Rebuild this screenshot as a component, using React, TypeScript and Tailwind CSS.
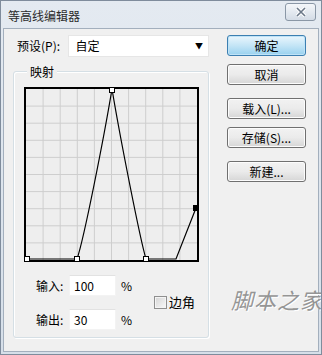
import React from "react";

const GRID = Array.from({ length: 9 }, (_, i) => 2 + (i + 1) * 17.1);

const Button = ({ label, primary }: { label: string; primary?: boolean }) => (
  <div
    className={`w-[79px] h-[21px] rounded-[3px] border flex items-center justify-center text-[12px] ${
      primary
        ? "border-[#3c7fb1] bg-gradient-to-b from-[#eaf6fd] via-[#c4e5f6] to-[#98d1ef] shadow-[0_0_0_1px_#bfe3f7_inset]"
        : "border-[#707070] bg-gradient-to-b from-[#f2f2f2] via-[#ebebeb] to-[#d6d6d6] shadow-[0_0_0_1px_#fcfcfc_inset]"
    }`}
  >
    {label}
  </div>
);

const Square = ({ x, y, filled }: { x: number; y: number; filled?: boolean }) => (
  <rect
    x={x - 2.5}
    y={y - 2.5}
    width={5}
    height={5}
    fill={filled ? "#000" : "#fff"}
    stroke="#000"
    strokeWidth={1}
  />
);

const Graph = () => (
  <svg width={175} height={175} viewBox="0 0 175 175" className="block">
    <rect x={0} y={0} width={175} height={175} fill="#eeeeee" />
    {GRID.map((g) => (
      <g key={g}>
        <line x1={g} y1={2} x2={g} y2={173} stroke="#cecece" strokeWidth={1} />
        <line x1={2} y1={g} x2={173} y2={g} stroke="#cecece" strokeWidth={1} />
      </g>
    ))}
    <rect x={1} y={1} width={173} height={173} fill="none" stroke="#000" strokeWidth={2} />
    <path
      d="M2,172 L53,172 C60,152 80,50 88,2 C96,50 116,152 122,172 L152,172 L172,121"
      fill="none"
      stroke="#000"
      strokeWidth={1.2}
    />
    <Square x={3} y={172} />
    <Square x={53} y={172} />
    <Square x={88} y={3} />
    <Square x={122} y={172} />
    <Square x={172} y={121} filled />
  </svg>
);

const Field = ({ label, value }: { label: string; value: string }) => (
  <div className="flex items-center h-[21px]">
    <span className="w-[33px] text-[12px]">{label}</span>
    <div className="w-[47px] h-[21px] bg-white border border-[#f3f3f3] border-t-[#e2e2e2] flex items-center pl-[4px] text-[12px]">
      {value}
    </div>
    <span className="ml-[5px] text-[12px]">%</span>
  </div>
);

export default function App() {
  return (
    <div className="relative w-[322px] h-[355px] overflow-hidden flex flex-col bg-gradient-to-b from-[#e4eaf1] to-[#d6dfe9] border border-[#7f8c9c] font-['Noto_Sans_CJK_SC','Liberation_Sans',sans-serif] text-black">
      <div className="h-[27px] flex items-start justify-between pl-[7px] pr-[5px]">
        <span className="mt-[6px] text-[12px] text-[#2b2b2b]">等高线编辑器</span>
        <div className="mt-[2px] w-[31px] h-[18px] rounded-[3px] border border-[#8a97a6] bg-gradient-to-b from-[#f4f7fa] to-[#d4dce6] flex items-center justify-center">
          <svg width={12} height={10} viewBox="0 0 12 10">
            <path d="M2,1 L10,9 M10,1 L2,9" stroke="#fff" strokeWidth={3.4} />
            <path d="M2,1 L10,9 M10,1 L2,9" stroke="#6b7888" strokeWidth={1.6} />
          </svg>
        </div>
      </div>
      <div className="flex-1 mx-[2px] mb-[2px] bg-[#f0f0f0] border border-[#a3afbd] flex pt-[6px] pl-[9px]">
        <div className="flex flex-col w-[196px]">
          <div className="flex items-center h-[22px]">
            <span className="pl-[4px] w-[56px] text-[12px]">预设(P):</span>
            <div className="w-[142px] h-[22px] bg-white border border-[#e6e6e6] flex items-center justify-between pl-[6px] pr-[5px] text-[12px]">
              <span>自定</span>
              <span className="text-[8px]">▼</span>
            </div>
          </div>
          <div className="relative mt-[14px] h-[267px] border border-[#d5dfe5] rounded-[3px] shadow-[inset_1px_1px_0_#fff,1px_1px_0_#fff] pl-[10px] pt-[15px]">
            <span className="absolute left-[13px] top-[-9px] px-[3px] bg-[#f0f0f0] text-[12px]">映射</span>
            <Graph />
            <div className="flex items-center mt-[13px] pl-[12px]">
              <div className="flex flex-col gap-[13px]">
                <Field label="输入:" value="100" />
                <Field label="输出:" value="30" />
              </div>
              <div className="flex items-center ml-[22px] mt-[-1px]">
                <div className="w-[13px] h-[13px] border border-[#8f8f8f] bg-gradient-to-br from-[#d4d4d4] to-[#fafafa] shadow-[inset_0_0_0_1px_#f4f4f4]" />
                <span className="ml-[2px] text-[13px]">边角</span>
              </div>
            </div>
          </div>
        </div>
        <div className="flex flex-col ml-[18px]">
          <Button label="确定" primary />
          <div className="mt-[8px]">
            <Button label="取消" />
          </div>
          <div className="mt-[13px]">
            <Button label="载入(L)..." />
          </div>
          <div className="mt-[8px]">
            <Button label="存储(S)..." />
          </div>
          <div className="mt-[13px]">
            <Button label="新建..." />
          </div>
        </div>
      </div>
      <span className="absolute left-[230px] top-[282px] text-[22px] italic text-[#959595] tracking-[1px] whitespace-nowrap [text-shadow:1px_1px_0_#fff]">
        脚本之家
      </span>
    </div>
  );
}
